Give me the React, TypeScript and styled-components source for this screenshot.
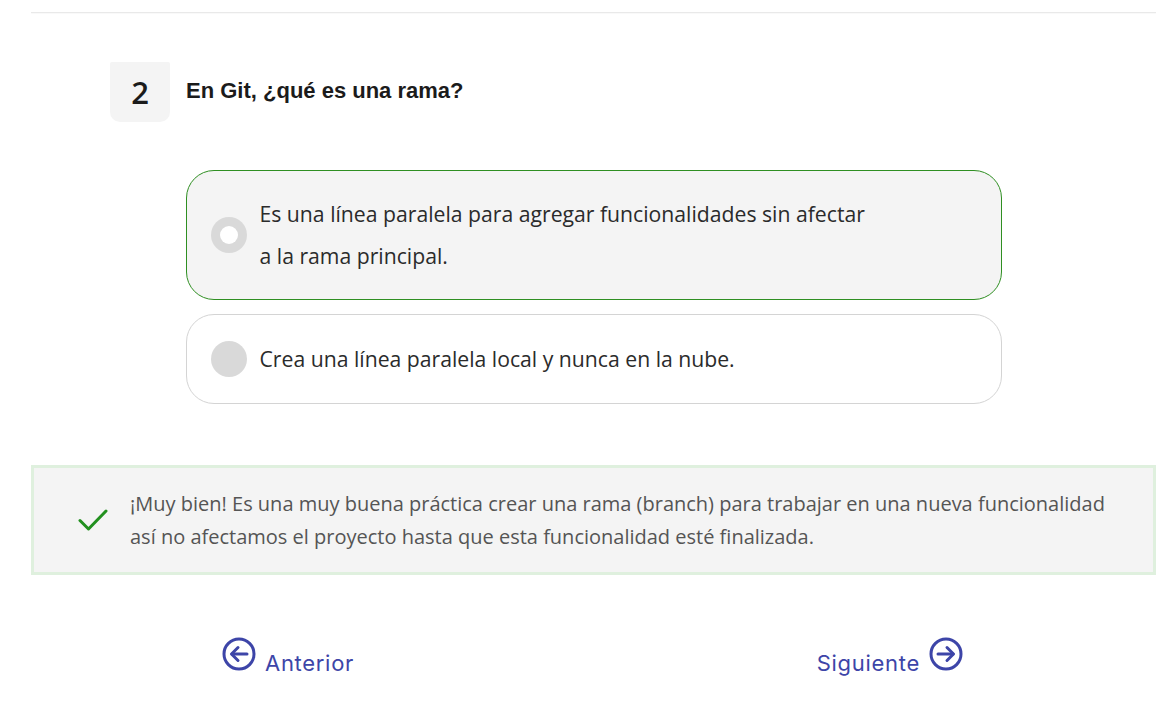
import React, { FC } from "react";
import styled, { createGlobalStyle } from "styled-components";

const GlobalStyle = createGlobalStyle`
  body {
    margin: 0;
    background: #ffffff;
    font-family: "Open Sans", "Noto Sans", sans-serif;
  }
`;

const Page = styled.div`
  width: 1125px;
  margin-left: 31px;
  padding: 12px 0 30px;
`;

const Rule = styled.div`
  height: 1px;
  background: #e9e9e9;
  box-shadow: 0 1px 1px rgba(0, 0, 0, 0.03);
`;

const QuestionHeader = styled.div`
  display: flex;
  align-items: center;
  gap: 16px;
  margin: 49px 0 0 79px;
`;

const NumberBox = styled.div`
  width: 60px;
  height: 60px;
  background: #f4f4f4;
  border-radius: 2px 2px 10px 10px;
  display: flex;
  align-items: center;
  justify-content: center;
  font-family: "Open Sans", sans-serif;
  font-weight: 600;
  font-size: 31px;
  color: #1b1b1b;
`;

const QuestionTitle = styled.h2`
  margin: 0 0 2px;
  font-family: "Liberation Sans", Arial, sans-serif;
  font-weight: 700;
  font-size: 22px;
  color: #1b1b1b;
`;

const Options = styled.div`
  width: 816px;
  margin: 48px auto 0;
  display: flex;
  flex-direction: column;
  gap: 14px;
`;

const Option = styled.div<{ selected: boolean }>`
  display: flex;
  align-items: center;
  gap: 13px;
  padding: ${({ selected }) => (selected ? "22px 24px" : "23px 24px")};
  border: 1px solid ${({ selected }) => (selected ? "#2f8f22" : "#d4d4d4")};
  background: ${({ selected }) => (selected ? "#f4f4f4" : "#ffffff")};
  border-radius: 28px;
`;

const Radio = styled.span<{ selected: boolean }>`
  flex: none;
  width: 36px;
  height: 36px;
  border-radius: 50%;
  background: #d9d9d9;
  display: flex;
  align-items: center;
  justify-content: center;
  &::after {
    content: "";
    width: 18px;
    height: 18px;
    border-radius: 50%;
    background: #ffffff;
    display: ${({ selected }) => (selected ? "block" : "none")};
  }
`;

const OptionText = styled.span`
  max-width: 614px;
  font-size: 21.2px;
  line-height: 42px;
  color: #2b2b2b;
`;

const Feedback = styled.div`
  margin-top: 61px;
  display: flex;
  align-items: center;
  gap: 22px;
  padding: 19px 20px 19px 44px;
  background: #f4f4f4;
  border: 3px solid #dff0de;
`;

const FeedbackText = styled.p`
  margin: 0;
  font-size: 20px;
  line-height: 33px;
  color: #555555;
`;

const Nav = styled.div`
  display: flex;
  justify-content: space-between;
  align-items: flex-start;
  padding: 62px 193px 0 191px;
`;

const NavLink = styled.a`
  display: flex;
  align-items: flex-start;
  gap: 9px;
  cursor: pointer;
  text-decoration: none;
  font-family: "Inter", sans-serif;
  font-weight: 400;
  font-size: 22px;
  letter-spacing: 0.7px;
  color: #3d45a8;
`;

const NavLabel = styled.span`
  line-height: 26px;
  margin-top: 13px;
`;

const CircleArrow: FC<{ dir: "left" | "right" }> = ({ dir }) => (
  <svg width="34" height="34" viewBox="0 0 34 34" fill="none" stroke="#3d45a8" strokeWidth="3" strokeLinecap="round" strokeLinejoin="round">
    <circle cx="17" cy="17" r="15" />
    {dir === "left" ? (
      <>
        <path d="M25 17H10" />
        <path d="M16 10.5L9.5 17L16 23.5" />
      </>
    ) : (
      <>
        <path d="M9 17H24" />
        <path d="M18 10.5L24.5 17L18 23.5" />
      </>
    )}
  </svg>
);

const Check = () => (
  <svg width="30" height="24" viewBox="0 0 30 24" fill="none" stroke="#22901f" strokeWidth="3" strokeLinecap="round" strokeLinejoin="round">
    <path d="M2 12.5L10.5 21L28 3" />
  </svg>
);

const options = [
  {
    text: "Es una línea paralela para agregar funcionalidades sin afectar a la rama principal.",
    selected: true,
  },
  { text: "Crea una línea paralela local y nunca en la nube.", selected: false },
];

export default function App() {
  return (
    <>
      <GlobalStyle />
      <Page>
        <Rule />
        <QuestionHeader>
          <NumberBox>2</NumberBox>
          <QuestionTitle>En Git, ¿qué es una rama?</QuestionTitle>
        </QuestionHeader>
        <Options>
          {options.map((o) => (
            <Option key={o.text} selected={o.selected}>
              <Radio selected={o.selected} />
              <OptionText>{o.text}</OptionText>
            </Option>
          ))}
        </Options>
        <Feedback>
          <Check />
          <FeedbackText>
            ¡Muy bien! Es una muy buena práctica crear una rama (branch) para trabajar en una nueva funcionalidad
            <br />
            así no afectamos el proyecto hasta que esta funcionalidad esté finalizada.
          </FeedbackText>
        </Feedback>
        <Nav>
          <NavLink>
            <CircleArrow dir="left" />
            <NavLabel>Anterior</NavLabel>
          </NavLink>
          <NavLink>
            <NavLabel>Siguiente</NavLabel>
            <CircleArrow dir="right" />
          </NavLink>
        </Nav>
      </Page>
    </>
  );
}
